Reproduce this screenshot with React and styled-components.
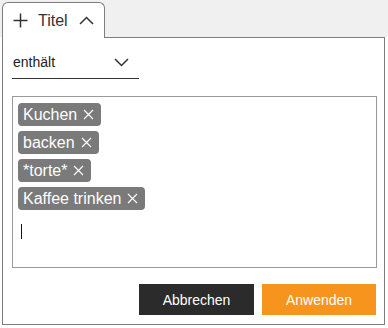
import styled, { createGlobalStyle } from "styled-components";

const GlobalStyle = createGlobalStyle`
  html, body {
    margin: 0;
    padding: 0;
    background: #ffffff;
    font-family: "Liberation Sans", Arial, sans-serif;
  }
`;

const Page = styled.div`
  width: 388px;
  height: 328px;
  overflow: hidden;
  box-sizing: border-box;
  padding: 2px 0 0 2px;
  background: linear-gradient(#f0f0f0 0, #f0f0f0 37px, #ffffff 37px);
`;

const Popup = styled.div`
  display: flex;
  flex-direction: column;
  align-items: flex-start;
`;

const Tab = styled.div`
  position: relative;
  z-index: 1;
  display: flex;
  align-items: center;
  gap: 10px;
  box-sizing: border-box;
  width: 103px;
  height: 36px;
  margin-bottom: -1px;
  padding: 0 0 0 10px;
  background: #ffffff;
  border: 1px solid #7d7d7d;
  border-bottom: none;
  border-radius: 6px 6px 0 0;
  color: #333333;
  font-size: 16px;
`;

const TabLabel = styled.span`
  margin-right: 1px;
`;

const Panel = styled.div`
  box-sizing: border-box;
  width: 383px;
  height: 288px;
  padding: 8px 7px 9px 9px;
  background: #ffffff;
  border: 1px solid #7d7d7d;
  display: flex;
  flex-direction: column;
`;

const Select = styled.div`
  box-sizing: border-box;
  width: 127px;
  height: 33px;
  display: flex;
  align-items: center;
  justify-content: space-between;
  padding: 0 10px 0 1px;
  border-bottom: 1px solid #333333;
  font-size: 14px;
  color: #222222;
`;

const TagBox = styled.div`
  box-sizing: border-box;
  margin-top: 17px;
  width: 365px;
  height: 172px;
  padding: 6px 5px;
  border: 1px solid #9a9a9a;
  display: flex;
  flex-direction: column;
  align-items: flex-start;
  gap: 5px;
`;

const Tag = styled.span`
  display: inline-flex;
  align-items: center;
  gap: 6px;
  height: 23px;
  padding: 0 7px 0 5px;
  border-radius: 4px;
  background: #7a7a7a;
  color: #ffffff;
  font-size: 16px;
  box-sizing: border-box;
`;

const Caret = styled.span`
  display: block;
  width: 1px;
  height: 15px;
  margin: 9px 0 0 3px;
  background: #111111;
`;

const Actions = styled.div`
  display: flex;
  justify-content: flex-end;
  gap: 8px;
  margin-top: 16px;
  padding-right: 1px;
`;

const Button = styled.button`
  width: ${(p) => p.$w}px;
  height: 31px;
  border: none;
  border-radius: 0;
  background: ${(p) => (p.$primary ? "#f7941e" : "#2b2b2b")};
  color: #ffffff;
  font-family: "Liberation Sans", Arial, sans-serif;
  font-size: 14px;
  padding: 0;
`;

const Plus = () => (
  <svg width="15" height="15" viewBox="0 0 15 15">
    <path d="M7.5 0.5v14M0.5 7.5h14" stroke="#333" strokeWidth="1.5" fill="none" />
  </svg>
);

const Chevron = ({ up }) => (
  <svg width="15" height="9" viewBox="0 0 15 9">
    <path
      d={up ? "M1 8L7.5 1.5L14 8" : "M1 1L7.5 7.5L14 1"}
      stroke="#333"
      strokeWidth="1.5"
      fill="none"
    />
  </svg>
);

const Cross = () => (
  <svg width="11" height="11" viewBox="0 0 11 11">
    <path d="M1 1L10 10M10 1L1 10" stroke="#fff" strokeWidth="1.2" fill="none" />
  </svg>
);

const tags = ["Kuchen", "backen", "*torte*", "Kaffee trinken"];

export default function App() {
  return (
    <>
      <GlobalStyle />
      <Page>
        <Popup>
          <Tab>
            <Plus />
            <TabLabel>Titel</TabLabel>
            <Chevron up />
          </Tab>
          <Panel>
            <Select>
              <span>enthält</span>
              <Chevron />
            </Select>
            <TagBox>
              {tags.map((t) => (
                <Tag key={t}>
                  {t}
                  <Cross />
                </Tag>
              ))}
              <Caret />
            </TagBox>
            <Actions>
              <Button $w={115}>Abbrechen</Button>
              <Button $w={114} $primary>
                Anwenden
              </Button>
            </Actions>
          </Panel>
        </Popup>
      </Page>
    </>
  );
}
